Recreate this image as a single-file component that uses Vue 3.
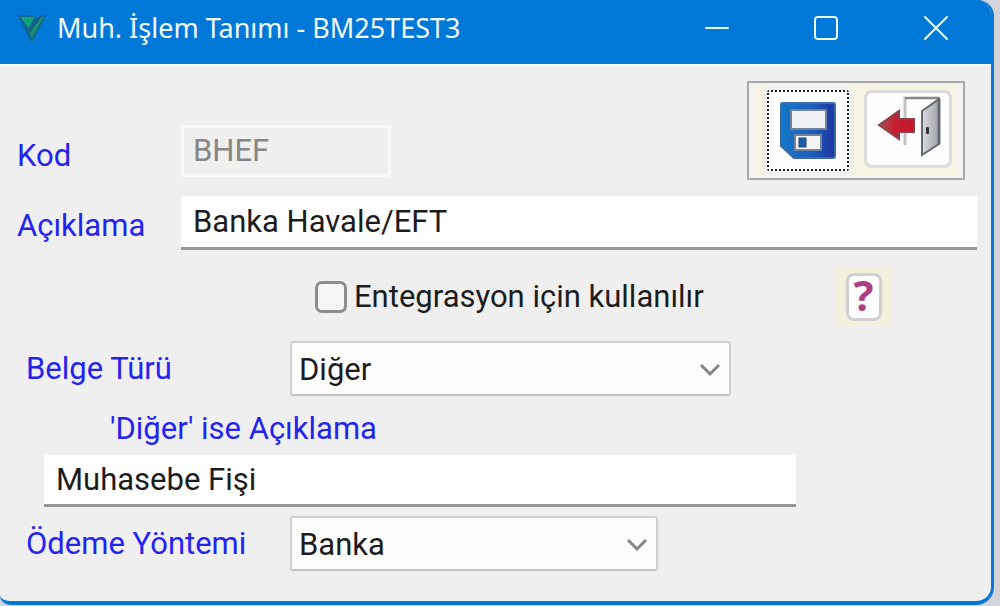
<script setup>
import { ref } from 'vue'

const code = ref('BHEF')
const description = ref('Banka Havale/EFT')
const integration = ref(false)
const docType = ref('Diğer')
const otherText = ref('Muhasebe Fişi')
const payment = ref('Banka')
</script>

<template>
  <main class="window">
    <header class="titlebar">
      <svg class="logo" viewBox="0 0 32 30" aria-hidden="true">
        <path d="M2 2h17l1 4 5-4h6L17 28h-2z" fill="#12638f" />
        <path d="M5 4h14l-6 11z" fill="#10a578" />
        <path d="M26 4h3L17 26l-3-6z" fill="#16907a" />
        <path d="M24 5 14 20M28 5 17 25" fill="none" stroke="#14606f" stroke-width="1" />
      </svg>
      <h1>Muh. İşlem Tanımı - BM25TEST3</h1>
      <div class="controls">
        <button type="button" aria-label="Simge durumuna küçült">
          <svg viewBox="0 0 28 28"><path d="M4 14h22" /></svg>
        </button>
        <button type="button" aria-label="Ekranı kapla">
          <svg viewBox="0 0 28 28"><rect x="3" y="3" width="22" height="22" rx="3" /></svg>
        </button>
        <button type="button" aria-label="Kapat">
          <svg viewBox="0 0 28 28"><path d="M3 3l22 22M25 3L3 25" /></svg>
        </button>
      </div>
    </header>

    <form class="form" @submit.prevent>
      <div class="row top">
        <label class="main-label" for="code">Kod</label>
        <input id="code" v-model="code" class="code" type="text" disabled />
        <div class="toolbar">
          <button class="tool save" type="button" aria-label="Kaydet">
            <svg viewBox="0 0 58 58">
              <defs>
                <linearGradient id="disk" x1="0" y1="0" x2="1" y2="0">
                  <stop offset="0" stop-color="#1478c8" />
                  <stop offset="0.6" stop-color="#1c5cba" />
                  <stop offset="1" stop-color="#2035a0" />
                </linearGradient>
              </defs>
              <path d="M2 3q0-2 2-2h50q2 0 2 2v51q0 2-2 2H15L2 44z" fill="url(#disk)" stroke="#3d6aa8" stroke-width="2" />
              <rect x="12" y="8" width="35" height="19" fill="#f0f1f3" stroke="#71839b" stroke-width="2" />
              <rect x="16" y="33" width="26" height="15" fill="#f4f4f4" stroke="#71839b" stroke-width="2" />
              <rect x="20" y="36" width="7" height="9" fill="#1b5ca8" stroke="#234775" stroke-width="1" />
            </svg>
          </button>
          <button class="tool exit" type="button" aria-label="Çıkış">
            <svg viewBox="0 0 66 62">
              <defs>
                <linearGradient id="door" x1="0" y1="0" x2="1" y2="0">
                  <stop offset="0" stop-color="#d8dade" />
                  <stop offset="1" stop-color="#a0a3a8" />
                </linearGradient>
                <linearGradient id="arrow" x1="0" y1="0" x2="1" y2="0">
                  <stop offset="0" stop-color="#a85055" />
                  <stop offset="0.45" stop-color="#c81f30" />
                  <stop offset="1" stop-color="#c5162a" />
                </linearGradient>
              </defs>
              <path d="M28 49V2h34" fill="none" stroke="#c2c2c2" stroke-width="3" />
              <path d="M28 2h34" stroke="#888" stroke-width="2" />
              <path d="M45 15 62 3v45L45 59z" fill="url(#door)" stroke="#66696d" stroke-width="2" />
              <path d="M62 3v45" stroke="#66696d" stroke-width="3" />
              <rect x="49" y="31" width="3" height="7" rx="1" fill="#333" />
              <path d="M2 29 22 15v8h15v13H22v7z" fill="url(#arrow)" stroke="#87434b" stroke-width="2" />
            </svg>
          </button>
        </div>
      </div>

      <div class="row description">
        <label class="main-label" for="description">Açıklama</label>
        <input id="description" v-model="description" class="field" type="text" />
      </div>

      <div class="row options">
        <label class="check">
          <input v-model="integration" type="checkbox" />
          <span>Entegrasyon için kullanılır</span>
        </label>
        <div class="help-box">
          <button class="help" type="button" aria-label="Yardım">?</button>
        </div>
      </div>

      <div class="row choice doc">
        <label for="doc-type">Belge Türü</label>
        <div class="select">
          <select id="doc-type" v-model="docType">
            <option>Diğer</option>
          </select>
          <svg viewBox="0 0 22 14" aria-hidden="true"><path d="M2 2l9 9 9-9" /></svg>
        </div>
      </div>

      <label class="other-label" for="other">'Diğer' ise Açıklama</label>
      <div class="row other">
        <input id="other" v-model="otherText" class="field" type="text" />
      </div>

      <div class="row choice payment">
        <label for="payment">Ödeme Yöntemi</label>
        <div class="select">
          <select id="payment" v-model="payment">
            <option>Banka</option>
          </select>
          <svg viewBox="0 0 22 14" aria-hidden="true"><path d="M2 2l9 9 9-9" /></svg>
        </div>
      </div>
    </form>
  </main>
</template>

<style>
body {
  background: #d3d3da;
}
</style>

<style scoped>
* {
  box-sizing: border-box;
}

.window {
  margin-right: 6px;
  overflow: hidden;
  background: #efefef;
  border-right: 3px solid #0b76d4;
  border-bottom: 4px solid #0078d4;
  border-radius: 0 16px 18px 10px;
  font-family: Roboto, "Liberation Sans", sans-serif;
  font-size: 31px;
  line-height: 36px;
  color: #1c1c1c;
}

.titlebar {
  display: flex;
  align-items: center;
  height: 64px;
  padding: 0 14px 8px 15px;
  background: #0078d7;
  color: #f2fbff;
}

.logo {
  width: 33px;
  height: 30px;
}

h1 {
  flex: 1;
  margin: 0 0 0 9px;
  font-family: "Noto Sans", "Open Sans", sans-serif;
  font-size: 27px;
  font-weight: 400;
  line-height: 36px;
  white-space: nowrap;
}

.controls {
  display: flex;
  gap: 28px;
}

.controls button {
  display: flex;
  align-items: center;
  justify-content: center;
  width: 82px;
  height: 48px;
  padding: 0;
  border: 0;
  background: none;
}

.controls svg {
  width: 28px;
  height: 28px;
  fill: none;
  stroke: #eafaff;
  stroke-width: 2;
  stroke-linecap: round;
}

.form {
  padding: 15px 0 30px;
  border-top: 2px solid #f6fbfd;
}

.row {
  display: flex;
  align-items: center;
}

label {
  color: #2424ee;
  white-space: nowrap;
}

.main-label {
  flex: 0 0 181px;
  padding-left: 17px;
}

.top {
  align-items: flex-end;
  padding-right: 26px;
}

.top .main-label {
  padding-bottom: 6px;
}

input[type='text'] {
  min-width: 0;
  padding: 0 12px;
  border: 0;
  font: inherit;
  color: inherit;
}

.code {
  width: 210px;
  height: 52px;
  margin-bottom: 3px;
  background: #efefef;
}

input.code {
  border: 3px solid #f8f8f8;
  padding: 0 9px 2px;
  color: #868686;
}

.toolbar {
  display: flex;
  gap: 15px;
  height: 99px;
  margin-left: auto;
  padding: 7px 11px 7px 18px;
  border: 2px solid #a9a9a9;
  background: linear-gradient(#f7f3e2, #f7f3e2) center / calc(100% - 10px) calc(100% - 6px) no-repeat #f3f3f3;
}

.tool {
  display: flex;
  align-items: center;
  justify-content: center;
  width: 88px;
  height: 78px;
  padding: 0;
  border: 3px solid #dcdcdc;
  border-radius: 8px;
  background: #fdfdfd;
}

.save {
  width: 82px;
  height: 81px;
  border: 2px dotted #222;
  border-radius: 2px;
  outline: 4px solid #f0f0ee;
}

.save svg {
  width: 58px;
  height: 58px;
}

.exit svg {
  width: 66px;
  height: 62px;
  margin: 0 0 4px 4px;
}

.description {
  margin-top: 16px;
  padding-right: 14px;
}

.description .main-label {
  padding-top: 6px;
}

.field {
  flex: 1;
  height: 54px;
  background: #fff;
}

input.field {
  border-bottom: 3px solid #979797;
}

.options {
  justify-content: space-between;
  margin-top: 18px;
  padding: 0 100px 0 315px;
}

.check {
  display: flex;
  align-items: center;
  gap: 7px;
  color: #1c1c1c;
}

.check input {
  appearance: none;
  width: 32px;
  height: 32px;
  margin: 0;
  border: 3px solid #8c8c8c;
  border-radius: 7px;
  background: #f5f5f5;
}

.check input:checked {
  background: #0078d7;
}

.help-box {
  display: flex;
  justify-content: center;
  align-items: center;
  width: 55px;
  height: 58px;
  background: #f4f0de;
}

.help {
  width: 36px;
  height: 48px;
  padding: 0 0 4px;
  border: 3px solid #d0d0d3;
  border-radius: 8px;
  background: #fff;
  color: #ac3f83;
  font-family: "Open Sans", "Noto Sans", sans-serif;
  font-size: 42px;
  font-weight: 700;
  line-height: 36px;
}

.choice label {
  flex: 0 0 290px;
  padding-left: 26px;
}

.doc {
  margin-top: 15px;
  padding-right: 260px;
}

.select {
  position: relative;
  flex: 1;
}

select {
  appearance: none;
  display: block;
  width: 100%;
  height: 55px;
  padding: 2px 44px 0 7px;
  border: 2px solid #d0d0d0;
  border-bottom-color: #c2c2c2;
  border-radius: 3px;
  background: #fdfdfd;
  font: inherit;
  color: inherit;
}

.select svg {
  position: absolute;
  top: 22px;
  right: 10px;
  width: 22px;
  height: 14px;
  fill: none;
  stroke: #858585;
  stroke-width: 3;
  pointer-events: none;
}

.other-label {
  display: block;
  padding: 15px 0 8px 110px;
}

.other {
  padding: 0 195px 0 44px;
}

.other .field {
  height: 52px;
}

.payment {
  margin-top: 9px;
  padding-right: 333px;
}
</style>
